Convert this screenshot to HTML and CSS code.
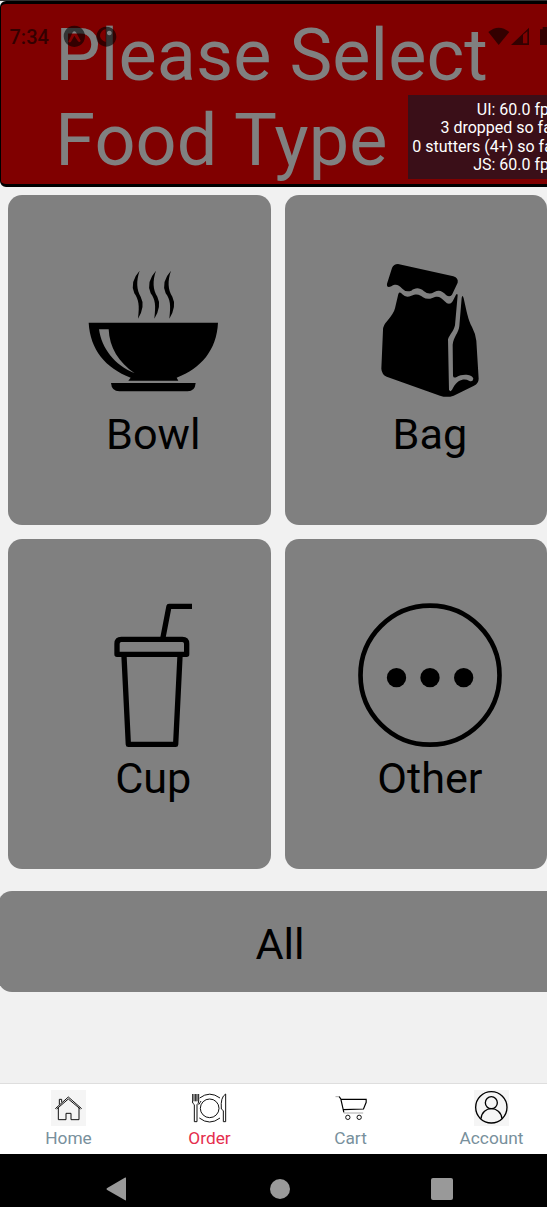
FILE: index.html
```
<!DOCTYPE html>
<html lang="en">
<head>
<meta charset="utf-8">
<title>Food Type</title>
<link rel="stylesheet" href="styles.css">
</head>
<body>
<div class="screen">
  <header class="header">
    <h1 class="title">Please Select<br>Food Type</h1>
  </header>
  <div class="status">
    <span class="clock">7:34</span>
    <svg class="status-left" viewBox="190 74 162 68">
      <path fill-rule="evenodd" d="M224 76a32 32 0 1 0 .1 0zM206 124l13-28q5-6 10 0l14 25q-3 7-8 2l-11-17-10 18q-4 5-8 0z"/>
      <path fill-rule="evenodd" d="M320 79a30 30 0 1 0 .1 0zM318 86v39q-14-4-17-17 0-17 17-22zM329 91a7 7 0 1 1-.1 0z"/>
    </svg>
    <svg class="status-right" viewBox="645 78 177 60">
      <path d="M646 96Q677 70 709 96L677 135z"/>
      <path fill-rule="evenodd" d="M714 135L768 83v52zM750 104v26h13v-36z"/>
      <path d="M801 88h8v-7h18v54h-26z"/>
    </svg>
  </div>
  <div class="perf">UI: 60.0 fps<br>3 dropped so far<br>0 stutters (4+) so far<br>JS: 60.0 fps</div>

  <main class="grid">
    <div class="card">
      <svg class="card-icon" viewBox="63 27 432 432">
        <path class="steam" d="M239 62Q208 96 223 130C236 149 239 165 234 206Q257 168 242 140C230 119 228 93 239 62zM288 62Q257 96 272 130C286 149 288 165 283 206Q306 168 292 140C279 119 277 93 288 62zM333 62Q302 96 317 130C331 149 333 165 328 206Q351 168 337 140C324 119 322 93 333 62z"/>
        <path fill-rule="evenodd" d="M86 218H474C470 300 424 354 350 383L355 392H205L212 383C136 353 91 300 86 218zM117 238C125 295 163 345 224 370C176 337 148 292 146 238z"/>
        <path d="M153 399H407Q405 424 383 424H178Q155 424 153 399z"/>
      </svg>
      <div class="label">Bowl</div>
    </div>
    <div class="card">
      <svg class="card-icon" viewBox="24 27 432 432">
        <path d="M144 42L310 79Q326 84 323 98L306 134Q299 143 289 136C276 122 267 119 253 126Q237 136 222 124C207 111 195 114 184 122Q168 128 157 116C145 104 137 101 124 109Q109 115 111 101L126 54Q131 42 144 42z"/>
        <path d="M145 132Q149 123 157 133Q168 145 184 137C202 129 211 135 219 142Q232 150 247 144C263 136 272 140 284 154Q298 169 308 154L318 134Q322 129 323 136L315 226C311 244 300 252 294 268L297 419Q302 430 309 414C324 386 345 386 357 392Q368 397 370 386C367 372 336 370 320 381Q310 386 309 377L308 284C310 262 326 248 328 228L335 144Q337 132 341 145C350 184 354 210 366 231Q377 252 379 272L386 386Q386 400 372 407L311 437Q291 444 270 437L110 380Q95 373 94 356L99 240Q99 226 111 214Q132 189 135 175z"/>
      </svg>
      <div class="label">Bag</div>
    </div>
    <div class="card">
      <svg class="card-icon line" viewBox="3 39 432 432">
        <path d="M248 148L267 49H336"/>
        <path d="M111 193V161Q111 148 124 148H307Q320 148 320 161V193z"/>
        <path d="M132 198L145 463H287L300 198"/>
      </svg>
      <div class="label">Cup</div>
    </div>
    <div class="card">
      <svg class="card-icon" viewBox="54 39 432 432">
        <circle cx="270" cy="255.5" r="208.5" fill="none" stroke="#000" stroke-width="14"/>
        <circle cx="169.500" cy="263" r="29"/><circle cx="270" cy="263" r="29"/><circle cx="371" cy="263" r="29"/>
      </svg>
      <div class="label">Other</div>
    </div>
  </main>
  <div class="all">All</div>

  <nav class="tabs">
    <div class="tab">
      <svg class="tab-icon shaded" viewBox="153 45 105 108">
        <path d="M166 101L205 66L245 101M170 102L205 72L241 102M175 98V134H198V115H213V134H237V98M178 89V73H185V82"/>
      </svg>
      <span>Home</span>
    </div>
    <div class="tab active">
      <svg class="tab-icon" viewBox="576 45 105 108">
        <circle cx="629" cy="100" r="28"/>
        <path d="M599 69Q629 46 660 69M598 129Q629 153 660 129M577 57V78Q577 86 583 89V140H591V89Q596 86 596 78V57M582 57V79M587 57V79M591 57V79M596 89Q601 82 603 78M677 140V57Q661 66 664 102L670 107V140H677"/>
      </svg>
      <span>Order</span>
    </div>
    <div class="tab">
      <svg class="tab-icon" viewBox="178.500 45 105 108">
        <path class="faint" d="M186 65H198M211 114H269"/>
        <path class="cart" d="M197 65L202 72L211 112M202 73H278V82L270 102L209 104"/>
        <circle cx="223" cy="127" r="6.500"/><circle cx="257" cy="127" r="6.500"/>
      </svg>
      <span>Cart</span>
    </div>
    <div class="tab">
      <svg class="tab-icon shaded" viewBox="603 45 105 108">
        <g class="bold"><circle cx="655" cy="97" r="47"/><circle cx="655" cy="83" r="18"/><path d="M624 131C627 91 683 91 687 131"/></g>
      </svg>
      <span>Account</span>
    </div>
  </nav>
  <footer class="system">
    <svg class="back" viewBox="0 0 20 24"><path d="M20 1.500V22.500Q20 24 18.500 23L1 13Q-.5 12 1 11L18.500 .8Q20 0 20 1.500z"/></svg>
    <div class="home-dot"></div>
    <div class="recent"></div>
  </footer>
</div>
</body>
</html>
```

FILE: styles.css
```
* { box-sizing: border-box; }
body {
  margin: 0;
  background: #f1f1f1;
  font-family: Roboto, sans-serif;
  color: #000;
}
.screen {
  position: relative;
  width: 547px;
  height: 1207px;
  overflow: hidden;
  display: flex;
  flex-direction: column;
  border-top: 1px solid #333;
}
svg { display: block; }
.header {
  flex: none;
  width: 556px;
  height: 186px;
  padding: 9px 0 0 54.300px;
  border: 3px solid #000;
  border-left-width: 1.500px;
  border-radius: 6px;
  background: #800000;
}
.title {
  margin: 0;
  font-size: 72px;
  line-height: 85px;
  font-weight: 400;
  letter-spacing: .1px;
  color: #808080;
  white-space: nowrap;
}
/* Translucent system overlay above the header */
.status {
  position: absolute;
  top: 23px;
  left: 9.500px;
  width: 537.500px;
  height: 25px;
  display: flex;
  align-items: center;
  opacity: .6;
}
.clock { width: 53.800px; padding-top: 2px; font-size: 20px; font-weight: 500; line-height: 25px; }
.status-left { width: 54px; height: 22.700px; }
.status-right { width: 59px; height: 20px; margin: -1px 0 0 auto; }
.perf {
  position: absolute;
  top: 93.500px;
  left: 408.300px;
  width: 149px;
  height: 84.500px;
  padding: 6.600px 0 0 4px;
  background: #3a0f18;
  color: #fff;
  font-size: 16px;
  line-height: 18.300px;
  text-align: right;
  white-space: nowrap;
}
.grid {
  flex: none;
  display: grid;
  grid-template-columns: 262.500px 262.500px;
  grid-auto-rows: 329.700px;
  gap: 14.800px 14.200px;
  padding: 8px 0 0 8px;
}
.card {
  display: flex;
  flex-direction: column;
  align-items: center;
  padding: 64px 0 0 28px;
  border-radius: 14px;
  background: #808080;
}
.card-icon { flex: none; width: 144px; height: 144px; }
.line { fill: none; stroke: #000; stroke-width: 16; stroke-linejoin: round; }
.label { margin-top: 6.500px; font-size: 43.200px; line-height: 50px; }
.all {
  flex: none;
  width: 564px;
  height: 100.500px;
  margin: 22px 0 0 -2px;
  border-radius: 14px;
  background: #808080;
  font-size: 43.200px;
  line-height: 107px;
  text-align: center;
}
.tabs {
  flex: none;
  display: flex;
  width: 566px;
  height: 71px;
  margin: auto 0 0 -2px;
  border-top: 1px solid #dedede;
  background: #fff;
}
.tab {
  width: 141px;
  padding-top: 6px;
  display: flex;
  flex-direction: column;
  align-items: center;
  color: #78909c;
  font-size: 17.300px;
  line-height: 20px;
}
.tab span { margin-top: 2px; }
.active { color: #e52e4d; }
.tab-icon { width: 35px; height: 36px; fill: none; stroke: #111; stroke-width: 3; }
.shaded { background: #f5f5f5; }
.bold { stroke: #000; stroke-width: 4; }
.faint { stroke: #aaa; }
.cart { stroke: #000; stroke-width: 3.500; }
.system {
  flex: none;
  height: 53px;
  display: flex;
  align-items: center;
  padding: 17px 0 0 105.500px;
  background: #000;
}
.back { width: 20.500px; height: 24px; fill: #999; }
.home-dot { width: 20px; height: 20px; margin-left: 144px; border-radius: 50%; background: #999; }
.recent { width: 22px; height: 22px; margin-left: 141px; border-radius: 2px; background: #999; }
```
